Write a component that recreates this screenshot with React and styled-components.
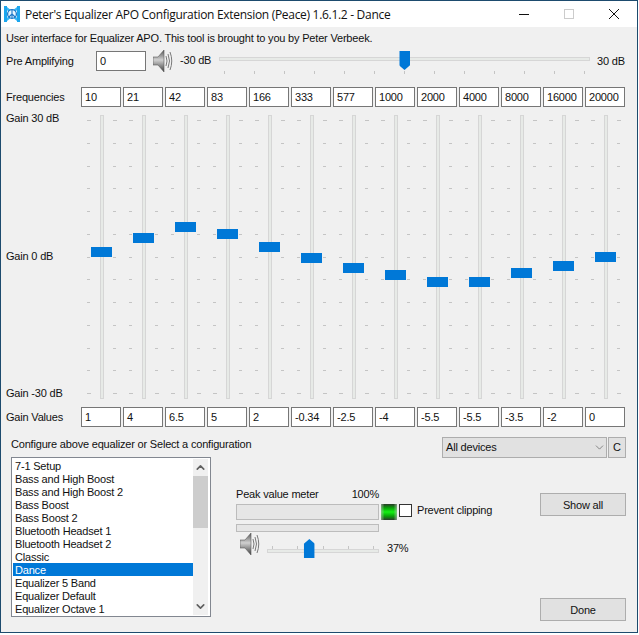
import React from 'react';
import styled, { createGlobalStyle } from 'styled-components';
import { ChevronUp, ChevronDown } from 'lucide-react';

const FREQUENCIES = [10, 21, 42, 83, 166, 333, 577, 1000, 2000, 4000, 8000, 16000, 20000];
const GAINS = ['1', '4', '6.5', '5', '2', '-0.34', '-2.5', '-4', '-5.5', '-5.5', '-3.5', '-2', '0'];
const PRESETS = [
  '7-1 Setup', 'Bass and High Boost', 'Bass and High Boost 2', 'Bass Boost', 'Bass Boost 2',
  'Bluetooth Headset 1', 'Bluetooth Headset 2', 'Classic', 'Dance', 'Equalizer 5 Band',
  'Equalizer Default', 'Equalizer Octave 1',
];

const Logo = () => (
  <svg width="16" height="16" viewBox="0 0 16 16">
    <rect x="0" y="0" width="3" height="16" fill="#1ba6ee" />
    <rect x="13" y="0" width="3" height="16" fill="#1ba6ee" />
    <path d="M3 1 L8 5 L13 1 V4 L10 8 L13 12 V15 L8 11 L3 15 V12 L6 8 L3 4 Z" fill="#35b6f5" />
    <circle cx="8" cy="8" r="4.4" fill="#e6f6ff" stroke="#1f78c8" strokeWidth="1.3" />
    <path d="M8 3.6 V12.4 M8 8 L4.9 11 M8 8 L11.1 11" stroke="#1f78c8" strokeWidth="1.1" fill="none" />
  </svg>
);

const Speaker = ({ id }) => (
  <svg width="20" height="24" viewBox="0 0 20 24">
    <defs>
      <linearGradient id={id} x1="0" y1="0" x2="0" y2="1">
        <stop offset="0" stopColor="#555" />
        <stop offset="0.45" stopColor="#d0d0d0" />
        <stop offset="1" stopColor="#3e3e3e" />
      </linearGradient>
    </defs>
    <path d="M0 8 H5 L11 1 V23 L5 16 H0 Z" fill={`url(#${id})`} stroke="#5c5c5c" strokeWidth="0.6" />
    <path d="M13 7 Q15 12 13 17 M15 5 Q18 12 15 19 M17 3 Q20.5 12 17 21" fill="none" stroke="#7a7a7a" strokeWidth="1" />
  </svg>
);

const Minimize = () => (
  <svg width="10" height="10" viewBox="0 0 10 10"><path d="M0 5.5 H10" stroke="#111" /></svg>
);
const Maximize = () => (
  <svg width="10" height="10" viewBox="0 0 10 10"><rect x="0.5" y="0.5" width="9" height="9" fill="none" stroke="#ccc" /></svg>
);
const Close = () => (
  <svg width="10" height="10" viewBox="0 0 10 10"><path d="M0 0 L10 10 M10 0 L0 10" stroke="#111" /></svg>
);

const ChannelSlider = ({ gain }) => {
  const top = Math.round(141.6 - parseFloat(gain) * 4.6 - 5);
  return (
    <Channel>
      <TickColumn>{Array.from({ length: 13 }, (_, i) => <Tick key={i} $long={i === 0 || i === 12} />)}</TickColumn>
      <VTrack />
      <TickColumn>{Array.from({ length: 13 }, (_, i) => <Tick key={i} $long={i === 0 || i === 12} />)}</TickColumn>
      <VThumb style={{ top }} />
    </Channel>
  );
};

const NumberRow = ({ label, values }) => (
  <Row>
    <RowLabel>{label}</RowLabel>
    <Boxes>{values.map((v, i) => <ValueBox key={i}>{v}</ValueBox>)}</Boxes>
  </Row>
);

export default function App() {
  return (
    <>
      <GlobalStyle />
      <Window>
        <TitleBar>
          <Logo />
          <Title>Peter's Equalizer APO Configuration Extension (Peace) 1.6.1.2 - Dance</Title>
          <Controls>
            <ControlButton><Minimize /></ControlButton>
            <ControlButton><Maximize /></ControlButton>
            <ControlButton><Close /></ControlButton>
          </Controls>
        </TitleBar>
        <Content>
          <Intro>User interface for Equalizer APO. This tool is brought to you by Peter Verbeek.</Intro>
          <PreampRow>
            <PreLabel>Pre Amplifying</PreLabel>
            <PreBox>0</PreBox>
            <SpeakerWrap><Speaker id="speaker-a" /></SpeakerWrap>
            <MinLabel>-30 dB</MinLabel>
            <PreSlider>
              <HTrack />
              <TickRow>{Array.from({ length: 13 }, (_, i) => <HTick key={i} />)}</TickRow>
              <HThumb $down style={{ left: '50%' }} />
            </PreSlider>
            <MaxLabel>30 dB</MaxLabel>
          </PreampRow>
          <FreqRow><NumberRow label="Frequencies" values={FREQUENCIES} /></FreqRow>
          <EqRow>
            <GainScale>
              <span>Gain 30 dB</span>
              <span>Gain 0 dB</span>
              <span>Gain -30 dB</span>
            </GainScale>
            <Channels>{GAINS.map((g, i) => <ChannelSlider key={i} gain={g} />)}</Channels>
          </EqRow>
          <NumberRow label="Gain Values" values={GAINS} />
          <Bottom>
            <ListColumn>
              <ConfigLabel>Configure above equalizer or Select a configuration</ConfigLabel>
              <ListBox>
                <Items>
                  {PRESETS.map((p) => <Item key={p} $selected={p === 'Dance'}>{p}</Item>)}
                </Items>
                <ScrollBar>
                  <ScrollButton><ChevronUp size={13} strokeWidth={3} /></ScrollButton>
                  <ScrollThumb />
                  <ScrollRest />
                  <ScrollButton><ChevronDown size={13} strokeWidth={3} /></ScrollButton>
                </ScrollBar>
              </ListBox>
            </ListColumn>
            <RightSide>
              <DeviceRow>
                <DeviceSelect>
                  All devices
                  <ChevronDown size={13} strokeWidth={1.2} color="#555" />
                </DeviceSelect>
                <SmallButton>C</SmallButton>
              </DeviceRow>
              <LowerRow>
                <Meter>
                  <MeterHead><span>Peak value meter</span><span>100%</span></MeterHead>
                  <MeterLine>
                    <PeakBar $height={16} />
                    <Led />
                    <CheckBox />
                    <CheckLabel>Prevent clipping</CheckLabel>
                  </MeterLine>
                  <PeakBar $height={8} />
                  <VolumeRow>
                    <SpeakerSmall><Speaker id="speaker-b" /></SpeakerSmall>
                    <VolumeSlider>
                      <TickRow>{Array.from({ length: 5 }, (_, i) => <HTick key={i} />)}</TickRow>
                      <HTrack />
                      <HThumb style={{ left: `${5 + 0.37 * 101}px` }} />
                    </VolumeSlider>
                    <VolumeText>37%</VolumeText>
                  </VolumeRow>
                </Meter>
                <Buttons>
                  <ActionButton>Show all</ActionButton>
                  <ActionButton>Done</ActionButton>
                </Buttons>
              </LowerRow>
            </RightSide>
          </Bottom>
        </Content>
      </Window>
    </>
  );
}

const GlobalStyle = createGlobalStyle`
  html, body {
    margin: 0;
    background: #fff;
  }
  * {
    box-sizing: border-box;
  }
`;

const Window = styled.div`
  width: 638px;
  height: 633px;
  border: 1px solid #1d4b6e;
  background: #f0f0f0;
  font-family: "Liberation Sans", Arial, sans-serif;
  font-size: 11px;
  line-height: 13px;
  letter-spacing: -0.19px;
  color: #111;
  display: flex;
  flex-direction: column;
  overflow: hidden;
`;

const TitleBar = styled.div`
  height: 26px;
  background: #fff;
  display: flex;
  align-items: center;
  padding-left: 3px;
`;

const Title = styled.div`
  margin-left: 5px;
  font-family: "Open Sans", sans-serif;
  font-size: 12px;
  letter-spacing: -0.3px;
  white-space: nowrap;
`;

const Controls = styled.div`
  margin-left: auto;
  margin-right: 1px;
  display: flex;
`;

const ControlButton = styled.div`
  width: 45px;
  height: 26px;
  display: flex;
  align-items: center;
  justify-content: center;
`;

const Content = styled.div`
  flex: 1;
  padding: 5px 11px 0 5px;
  display: flex;
  flex-direction: column;
`;

const Intro = styled.div`
  height: 13px;
  white-space: nowrap;
`;

const PreampRow = styled.div`
  margin-top: 6px;
  height: 24px;
  display: flex;
  align-items: flex-start;
`;

const PreLabel = styled.div`
  width: 90px;
  margin-top: 4px;
`;

const ValueBox = styled.div`
  width: 40px;
  height: 20px;
  border: 1px solid #767676;
  background: #fff;
  padding: 3px 3px 0;
  white-space: nowrap;
  overflow: hidden;
`;

const PreBox = styled(ValueBox)`
  width: 50px;
`;

const SpeakerWrap = styled.div`
  margin: -2px 0 0 7px;
  width: 27px;
`;

const MinLabel = styled.div`
  width: 39px;
  margin-top: 3px;
`;

const PreSlider = styled.div`
  position: relative;
  width: 371px;
  padding-top: 6px;
`;

const HTrack = styled.div`
  height: 4px;
  background: #e7eae7;
  border: 1px solid #d6d6d6;
`;

const TickRow = styled.div`
  height: 3px;
  margin-top: 10px;
  padding: 0 5px;
  display: flex;
  justify-content: space-between;
`;

const HTick = styled.div`
  width: 1px;
  height: 3px;
  background: #c4c4c4;
`;

const HThumb = styled.div`
  position: absolute;
  width: 11px;
  height: 19px;
  background: #0078d7;
  transform: translateX(-50%);
  top: ${(p) => (p.$down ? '0' : '3px')};
  clip-path: ${(p) => (p.$down
    ? 'polygon(0 0, 100% 0, 100% 75%, 50% 100%, 0 75%)'
    : 'polygon(50% 0, 100% 25%, 100% 100%, 0 100%, 0 25%)')};
`;

const MaxLabel = styled.div`
  margin: 4px 0 0 7px;
  white-space: nowrap;
`;

const FreqRow = styled.div`
  margin-top: 12px;
`;

const Row = styled.div`
  display: flex;
  align-items: center;
`;

const RowLabel = styled.div`
  width: 75px;
`;

const Boxes = styled.div`
  display: flex;
  gap: 2px;
`;

const EqRow = styled.div`
  margin-top: 5px;
  height: 295px;
  display: flex;
`;

const GainScale = styled.div`
  width: 81px;
  height: 288px;
  display: flex;
  flex-direction: column;
  justify-content: space-between;
`;

const Channels = styled.div`
  display: flex;
  gap: 12px;
  padding-top: 3px;
`;

const Channel = styled.div`
  position: relative;
  width: 30px;
  height: 284px;
  display: flex;
  justify-content: space-between;
`;

const TickColumn = styled.div`
  width: 4px;
  padding: 5px 0 5px;
  display: flex;
  flex-direction: column;
  justify-content: space-between;
`;

const Tick = styled.div`
  width: ${(p) => (p.$long ? '4px' : '3px')};
  height: 1px;
  background: #c4c4c4;
`;

const VTrack = styled.div`
  width: 4px;
  height: 100%;
  background: #e7eae7;
  border: 1px solid #d6d6d6;
`;

const VThumb = styled.div`
  position: absolute;
  left: 4px;
  width: 21px;
  height: 10px;
  background: #0078d7;
`;

const Bottom = styled.div`
  display: flex;
  padding-left: 5px;
  padding-top: 10px;
`;

const ListColumn = styled.div`
  width: 200px;
`;

const ConfigLabel = styled.div`
  margin-top: 1px;
  height: 19px;
  white-space: nowrap;
`;

const ListBox = styled.div`
  height: 160px;
  border: 1px solid #828790;
  background: #fff;
  padding: 1px 2px 1px 1px;
  display: flex;
`;

const Items = styled.div`
  flex: 1;
`;

const Item = styled.div`
  height: 13px;
  padding: 1px 0 0 2px;
  white-space: nowrap;
  background: ${(p) => (p.$selected ? '#0078d7' : 'transparent')};
  color: ${(p) => (p.$selected ? '#fff' : '#111')};
`;

const ScrollBar = styled.div`
  width: 15px;
  background: #f0f0f0;
  display: flex;
  flex-direction: column;
`;

const ScrollButton = styled.div`
  height: 17px;
  display: flex;
  align-items: center;
  justify-content: center;
  color: #606060;
`;

const ScrollThumb = styled.div`
  height: 52px;
  background: #cdcdcd;
`;

const ScrollRest = styled.div`
  flex: 1;
`;

const RightSide = styled.div`
  flex: 1;
  display: flex;
  flex-direction: column;
`;

const DeviceRow = styled.div`
  display: flex;
  justify-content: flex-end;
  gap: 1px;
`;

const DeviceSelect = styled.div`
  width: 165px;
  height: 21px;
  background: #e1e1e1;
  border: 1px solid #adadad;
  padding: 0 0 0 3px;
  display: flex;
  align-items: center;
  justify-content: space-between;
`;

const SmallButton = styled.div`
  width: 18px;
  height: 21px;
  background: #e1e1e1;
  border: 1px solid #adadad;
  display: flex;
  align-items: center;
  justify-content: center;
`;

const LowerRow = styled.div`
  margin-top: 31px;
  display: flex;
  justify-content: space-between;
`;

const Meter = styled.div`
  margin-left: 25px;
  width: 143px;
`;

const MeterHead = styled.div`
  display: flex;
  justify-content: space-between;
  height: 16px;
  margin-top: -1px;
`;

const MeterLine = styled.div`
  display: flex;
  align-items: flex-start;
  height: 20px;
  width: 300px;
`;

const PeakBar = styled.div`
  width: 143px;
  height: ${(p) => p.$height}px;
  background: #e6e6e6;
  border: 1px solid #bcbcbc;
  flex: none;
`;

const Led = styled.div`
  width: 16px;
  height: 16px;
  margin-left: 2px;
  flex: none;
  background:
    linear-gradient(90deg, rgba(170,190,170,.7), transparent 22%, transparent 78%, rgba(170,190,170,.7)),
    linear-gradient(180deg, #2a3a2a, #07a507 25%, #14f014 50%, #07a507 75%, #2a3a2a);
`;

const CheckBox = styled.div`
  width: 13px;
  height: 13px;
  margin: 0 0 0 2px;
  background: #fff;
  border: 1px solid #333;
  flex: none;
`;

const CheckLabel = styled.div`
  margin: 0 0 0 5px;
  white-space: nowrap;
`;

const VolumeRow = styled.div`
  display: flex;
  align-items: flex-start;
  width: 190px;
`;

const SpeakerSmall = styled.div`
  margin: 0 0 0 4px;
  width: 27px;
`;

const VolumeSlider = styled.div`
  position: relative;
  width: 112px;
  flex: none;
  margin-top: 4px;
`;

const VolumeText = styled.div`
  margin: 10px 0 0 8px;
`;

const Buttons = styled.div`
  width: 86px;
  height: 128px;
  margin-top: 4px;
  display: flex;
  flex-direction: column;
  justify-content: space-between;
`;

const ActionButton = styled.div`
  height: 23px;
  padding-top: 1px;
  background: #e1e1e1;
  border: 1px solid #adadad;
  display: flex;
  align-items: center;
  justify-content: center;
`;
